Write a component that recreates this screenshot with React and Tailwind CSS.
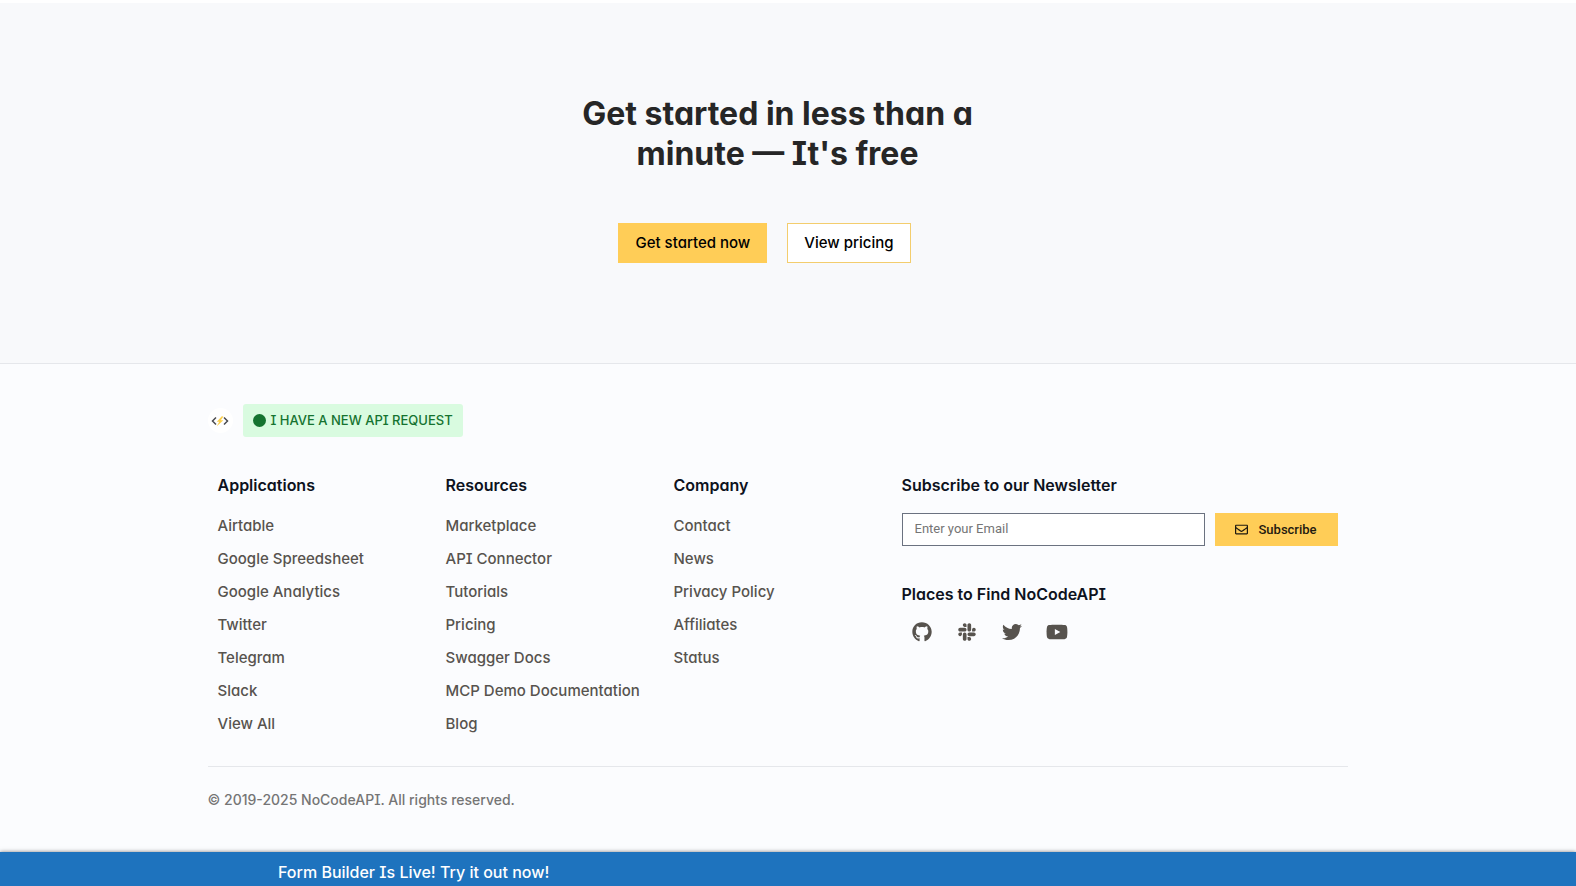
import { useState } from 'react';
import { FaGithub, FaSlack, FaTwitter, FaYoutube, FaRegEnvelope } from 'react-icons/fa';

const columns = [
    {
        title: 'Applications',
        links: ['Airtable', 'Google Spreedsheet', 'Google Analytics', 'Twitter', 'Telegram', 'Slack', 'View All'],
    },
    {
        title: 'Resources',
        links: ['Marketplace', 'API Connector', 'Tutorials', 'Pricing', 'Swagger Docs', 'MCP Demo Documentation', 'Blog'],
    },
    {
        title: 'Company',
        links: ['Contact', 'News', 'Privacy Policy', 'Affiliates', 'Status'],
    },
];

const socials = [
    { name: 'GitHub', Icon: FaGithub, size: 'size-5' },
    { name: 'Slack', Icon: FaSlack, size: 'size-5' },
    { name: 'Twitter', Icon: FaTwitter, size: 'size-5' },
    { name: 'YouTube', Icon: FaYoutube, size: 'size-[22px]' },
];

function Logo() {
    return (
        <a href="#" aria-label="NoCodeAPI" className="flex size-[25px] items-center justify-center rounded-full bg-white">
            <svg viewBox="0 0 18 12" className="w-[18px]" fill="none">
                <path d="M5 2.5 1.5 6 5 9.5M13 2.5 16.5 6 13 9.5" stroke="#4b4b4f" strokeWidth="1.5" />
                <path d="M10.8 1.2 5.8 6.8h2.4l-2.4 4.4 6.6-6H9.8l2.6-3.6z" fill="#fccf4b" />
            </svg>
        </a>
    );
}

function Hero() {
    return (
        <section className="border-t-[3px] border-b border-t-white border-b-[#e5e7eb] bg-[#f8f9fb] pt-[91px] pr-[21px] pb-[100px]">
            <h1 className="mx-auto max-w-[460px] text-center text-[32px] leading-10 font-bold text-[#262626]">
                Get started in less than a
                <br />
                minute — It's free
            </h1>
            <div className="mt-[49px] mr-[26px] flex justify-center gap-5">
                <button className="h-10 border border-[#ffcd57] bg-[#ffcd57] px-4 text-[15px] font-medium text-black">Get started now</button>
                <button className="h-10 border border-[#f3cd6d] bg-white px-4 text-[15px] font-medium text-black">View pricing</button>
            </div>
        </section>
    );
}

function FooterColumn({ title, links }) {
    return (
        <div className="px-[10px]">
            <h2 className="text-base leading-6 font-semibold text-[#0d1220]">{title}</h2>
            <ul className="mt-3">
                {links.map((link) => (
                    <li key={link} className="h-[33px] text-[15px] leading-[33px] font-medium whitespace-nowrap text-[#57534e]">
                        <a href="#">{link}</a>
                    </li>
                ))}
            </ul>
        </div>
    );
}

function Newsletter() {
    const [email, setEmail] = useState('');

    return (
        <div className="col-span-2 px-[10px]">
            <h2 className="text-base leading-6 font-semibold text-[#0d1220]">
                <label htmlFor="email">Subscribe to our Newsletter</label>
            </h2>
            <form className="mt-4 flex gap-[10px] font-[Roboto,sans-serif] text-[13px]" onSubmit={(e) => e.preventDefault()}>
                <input
                    id="email"
                    type="email"
                    placeholder="Enter your Email"
                    value={email}
                    onChange={(e) => setEmail(e.target.value)}
                    className="h-[33px] min-w-0 flex-1 border border-[#6b7280] bg-white px-3 pb-[2px] placeholder:text-[#757575]"
                />
                <button className="flex h-[33px] w-[123px] items-center justify-center gap-[10px] bg-[#ffcd57] font-medium text-[#1f1a10]">
                    <FaRegEnvelope className="size-[13px]" />
                    Subscribe
                </button>
            </form>
            <h2 className="mt-9 text-base leading-6 font-semibold text-[#0d1220]">Places to Find NoCodeAPI</h2>
            <div className="mt-[15px] ml-[9px] flex items-center gap-[23px] text-[#57534e]">
                {socials.map(({ name, Icon, size }) => (
                    <a key={name} href="#" aria-label={name} className="flex w-[22px] justify-center">
                        <Icon className={size} />
                    </a>
                ))}
            </div>
        </div>
    );
}

function Footer() {
    return (
        <footer className="bg-[#fbfcfe] pt-10 pr-[21px] pb-[42px]">
            <div className="mx-auto max-w-[1140px]">
                <div className="flex items-center gap-[10px]">
                    <Logo />
                    <a href="#" className="flex h-[33px] items-center gap-[5px] rounded-[3px] bg-[#d9fbe0] px-[10px] text-[13px] font-medium text-[#157330]">
                        <span className="size-[13px] rounded-full bg-[#157330]" />
                        I HAVE A NEW API REQUEST
                    </a>
                </div>
                <div className="mt-9 grid grid-cols-5 pb-[26px]">
                    {columns.map((column) => (
                        <FooterColumn key={column.title} {...column} />
                    ))}
                    <Newsletter />
                </div>
                <p className="border-t border-[#e5e7eb] pt-[23px] text-[14px] leading-5 font-medium text-[#757575]">
                    © 2019-2025 NoCodeAPI. All rights reserved.
                </p>
            </div>
        </footer>
    );
}

export default function App() {
    return (
        <div className="h-screen overflow-hidden bg-[#fbfcfe] font-[Inter,'Noto_Sans',sans-serif] [font-feature-settings:'cv08','cv11']">
            <Hero />
            <Footer />
            {/* Announcement bar */}
            <div className="relative h-[54px] bg-[#1e73be] pl-[278px] text-base leading-10 font-medium text-white shadow-[0_0_4px_rgba(0,0,0,0.5)]">
                <a href="#">Form Builder Is Live! Try it out now!</a>
            </div>
        </div>
    );
}
